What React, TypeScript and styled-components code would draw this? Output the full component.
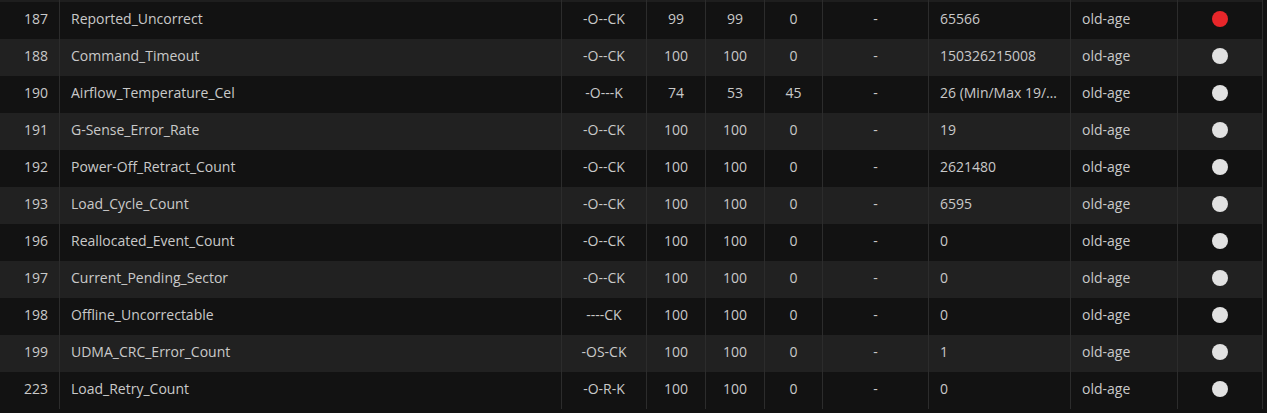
import React from 'react';
import styled, { createGlobalStyle } from 'styled-components';

const GlobalStyle = createGlobalStyle`
	html, body {
		margin: 0;
		padding: 0;
		background: #121212;
	}
	body {
		font-family: 'Open Sans', 'Noto Sans', sans-serif;
		font-size: 14px;
		color: #c9c9c9;
	}
`;

type Attribute = {
	id: number;
	name: string;
	flags: string;
	value: number;
	worst: number;
	thresh: number;
	failed: string;
	raw: string;
	type: string;
	warn?: boolean;
};

const attributes: Attribute[] = [
	{ id: 187, name: 'Reported_Uncorrect', flags: '-O--CK', value: 99, worst: 99, thresh: 0, failed: '-', raw: '65566', type: 'old-age', warn: true },
	{ id: 188, name: 'Command_Timeout', flags: '-O--CK', value: 100, worst: 100, thresh: 0, failed: '-', raw: '150326215008', type: 'old-age' },
	{ id: 190, name: 'Airflow_Temperature_Cel', flags: '-O---K', value: 74, worst: 53, thresh: 45, failed: '-', raw: '26 (Min/Max 19/39)', type: 'old-age' },
	{ id: 191, name: 'G-Sense_Error_Rate', flags: '-O--CK', value: 100, worst: 100, thresh: 0, failed: '-', raw: '19', type: 'old-age' },
	{ id: 192, name: 'Power-Off_Retract_Count', flags: '-O--CK', value: 100, worst: 100, thresh: 0, failed: '-', raw: '2621480', type: 'old-age' },
	{ id: 193, name: 'Load_Cycle_Count', flags: '-O--CK', value: 100, worst: 100, thresh: 0, failed: '-', raw: '6595', type: 'old-age' },
	{ id: 196, name: 'Reallocated_Event_Count', flags: '-O--CK', value: 100, worst: 100, thresh: 0, failed: '-', raw: '0', type: 'old-age' },
	{ id: 197, name: 'Current_Pending_Sector', flags: '-O--CK', value: 100, worst: 100, thresh: 0, failed: '-', raw: '0', type: 'old-age' },
	{ id: 198, name: 'Offline_Uncorrectable', flags: '----CK', value: 100, worst: 100, thresh: 0, failed: '-', raw: '0', type: 'old-age' },
	{ id: 199, name: 'UDMA_CRC_Error_Count', flags: '-OS-CK', value: 100, worst: 100, thresh: 0, failed: '-', raw: '1', type: 'old-age' },
	{ id: 223, name: 'Load_Retry_Count', flags: '-O-R-K', value: 100, worst: 100, thresh: 0, failed: '-', raw: '0', type: 'old-age' },
];

const columns = '60px 502px 85px 59px 59px 58px 106px 142px 107px 85px';

const Table = styled.div`
	width: 1263px;
`;

// tail of the row scrolled off above the viewport
const ScrolledEdge = styled.div`
	display: grid;
	grid-template-columns: ${columns};
	height: 2px;
	background: #1e1e1e;
`;

const Row = styled.div<{ $alt: boolean }>`
	display: grid;
	grid-template-columns: ${columns};
	height: 37px;
	background: ${({ $alt }) => ($alt ? '#212121' : '#121212')};
`;

const Cell = styled.div<{ $align?: 'left' | 'center' | 'right' }>`
	display: flex;
	align-items: center;
	justify-content: ${({ $align }) =>
		$align === 'right' ? 'flex-end' : $align === 'center' ? 'center' : 'flex-start'};
	padding: 0 11px 4px 11px;
	border-right: 1px solid #2c2c2c;
	min-width: 0;
	white-space: nowrap;
	line-height: 18px;
`;

const Clip = styled.span`
	overflow: hidden;
	text-overflow: ellipsis;
	white-space: nowrap;
`;

const Dot = styled.span<{ $warn?: boolean }>`
	width: 16px;
	height: 16px;
	border-radius: 50%;
	background: ${({ $warn }) => ($warn ? '#e8262a' : '#e1e1e1')};
`;

const EdgeCell = styled.div`
	border-right: 1px solid #2c2c2c;
`;

export default function App() {
	return (
		<>
			<GlobalStyle />
			<Table>
				<ScrolledEdge>
					{Array.from({ length: 10 }).map((_, i) => (
						<EdgeCell key={i} />
					))}
				</ScrolledEdge>
				{attributes.map((a, i) => (
					<Row key={a.id} $alt={i % 2 === 1}>
						<Cell $align="right">{a.id}</Cell>
						<Cell>{a.name}</Cell>
						<Cell $align="center">{a.flags}</Cell>
						<Cell $align="center">{a.value}</Cell>
						<Cell $align="center">{a.worst}</Cell>
						<Cell $align="center">{a.thresh}</Cell>
						<Cell $align="center">{a.failed}</Cell>
						<Cell>
							<Clip>{a.raw}</Clip>
						</Cell>
						<Cell>{a.type}</Cell>
						<Cell $align="center">
							<Dot $warn={a.warn} />
						</Cell>
					</Row>
				))}
			</Table>
		</>
	);
}
